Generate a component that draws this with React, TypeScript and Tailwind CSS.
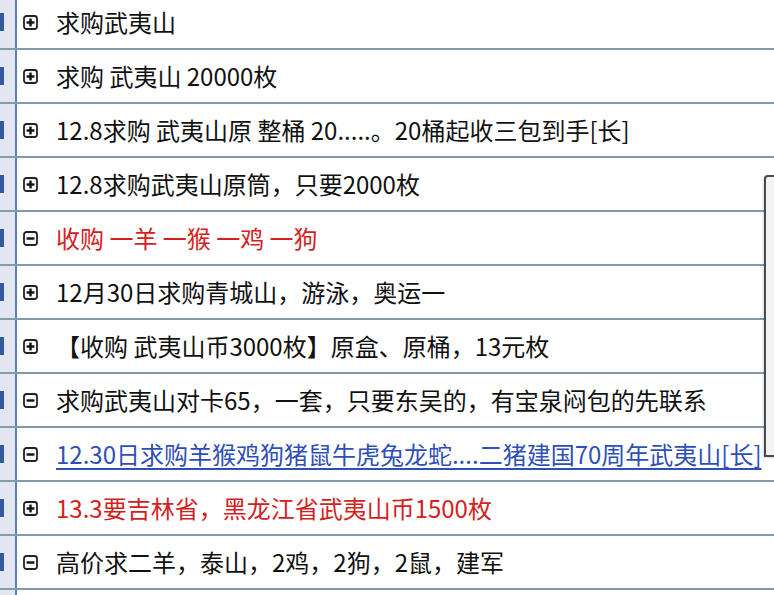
import React from "react";

type Row = { open: boolean; text: string; kind?: "red" | "link" };

const rows: Row[] = [
  { open: false, text: "求购武夷山" },
  { open: false, text: "求购 武夷山 20000枚" },
  { open: false, text: "12.8求购 武夷山原 整桶 20.....。20桶起收三包到手[长]" },
  { open: false, text: "12.8求购武夷山原筒，只要2000枚" },
  { open: true, text: "收购 一羊 一猴 一鸡 一狗", kind: "red" },
  { open: false, text: "12月30日求购青城山，游泳，奥运一" },
  { open: false, text: "【收购 武夷山币3000枚】原盒、原桶，13元枚" },
  { open: true, text: "求购武夷山对卡65，一套，只要东吴的，有宝泉闷包的先联系" },
  { open: true, text: "12.30日求购羊猴鸡狗猪鼠牛虎兔龙蛇....二猪建国70周年武夷山[长]", kind: "link" },
  { open: false, text: "13.3要吉林省，黑龙江省武夷山币1500枚", kind: "red" },
  { open: true, text: "高价求二羊，泰山，2鸡，2狗，2鼠，建军" },
  { open: false, text: "" },
];

function Toggle({ open }: { open: boolean }) {
  return (
    <svg width="15" height="15" viewBox="0 0 15 15" className="shrink-0">
      <rect x="1" y="1" width="13" height="13" rx="2.5" fill="#f7f7f7" stroke="#222" strokeWidth="1.8" />
      <rect x="3.6" y="6.3" width="7.8" height="2.4" fill="#111" />
      {!open && <rect x="6.3" y="3.6" width="2.4" height="7.8" fill="#111" />}
    </svg>
  );
}

export default function App() {
  return (
    <div
      className="relative w-[774px] h-[595px] overflow-hidden bg-white"
      style={{ fontFamily: '"Noto Sans CJK SC", "Noto Sans", sans-serif' }}
    >
      <div className="-mt-[4px] flex flex-col">
        {rows.map((r, i) => (
          <div key={i} className="flex h-[54px] border-b-2 border-[#8399ad]">
            <div className="w-[17px] shrink-0 bg-[#e3e6f0] border-r-2 border-[#5c80b8] flex items-center">
              <div className="w-[4px] h-[18px] bg-[#34599e]" />
            </div>
            <div className="flex items-center pl-[6px] min-w-0 flex-1">
              <Toggle open={r.open} />
              <div
                className={
                  "ml-[18px] whitespace-nowrap text-[24px] leading-none " +
                  (r.kind === "red"
                    ? "text-[#d3221e]"
                    : r.kind === "link"
                    ? "text-[#2f4fb8] underline decoration-[1.5px] underline-offset-[4px]"
                    : "text-[#111]")
                }
              >
                {r.text}
              </div>
            </div>
          </div>
        ))}
      </div>
      <div className="absolute left-[764px] top-[175px] w-[30px] h-[282px] rounded-tl-[4px] border-2 border-[#4a4a4a] bg-[#f3f3f3] shadow-[-1px_1px_2px_rgba(0,0,0,0.15)]" />
    </div>
  );
}
